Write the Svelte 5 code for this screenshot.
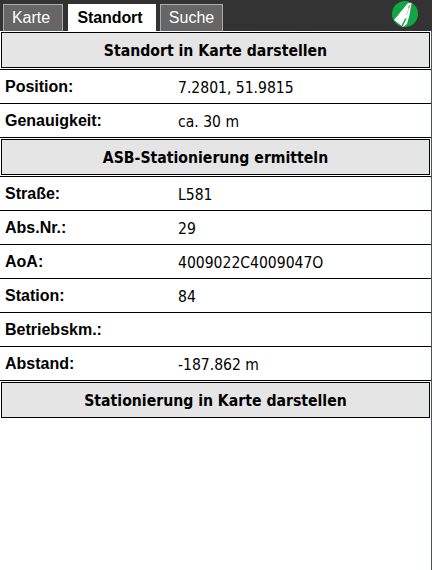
<script>
  const top = [["Position:", "7.2801, 51.9815"], ["Genauigkeit:", "ca. 30 m"]];
  const asb = [["Straße:", "L581"], ["Abs.Nr.:", "29"], ["AoA:", "4009022C4009047O"], ["Station:", "84"], ["Betriebskm.:", ""], ["Abstand:", "-187.862 m"]];
</script>

<div class="page">
  <header class="tabbar">
    <span class="tab karte">Karte</span>
    <span class="tab active">Standort</span>
    <span class="tab suche">Suche</span>
    <svg class="logo" width="28" height="28" viewBox="0 0 28 28" aria-hidden="true">
      <circle cx="14" cy="14" r="13" fill="#12a544" />
      <path d="M17 3 L20.5 3 L18.5 15 L16 24 L12 27 L3 20 Z" fill="#fff" />
      <path d="M11 26 L15 18.5" stroke="#12a544" stroke-width="1.5" />
      <path d="M18.4 5 L17.8 8.5" stroke="#e55" stroke-width="1.1" />
      <path d="M17.5 9.5 L15.5 15" stroke="#ccc" stroke-width="1" />
    </svg>
  </header>
  <main class="content">
    <div class="action-wrap"><button class="action">Standort in Karte darstellen</button></div>
    {#each top as [label, value]}
      <div class="row"><span class="label">{label}</span><span class="value">{value}</span></div>
    {/each}
    <div class="action-wrap"><button class="action">ASB-Stationierung ermitteln</button></div>
    {#each asb as [label, value]}
      <div class="row"><span class="label">{label}</span><span class="value">{value}</span></div>
    {/each}
    <div class="action-wrap last"><button class="action">Stationierung in Karte darstellen</button></div>
  </main>
</div>

<style>
  :global(body) { margin: 0; background: #fff; }
  .page { width: 432px; height: 570px; overflow: hidden; color: #000; position: relative; }
  .tabbar { display: flex; align-items: flex-end; height: 31px; background: #333; padding-left: 3px; position: relative; }
  .tab { box-sizing: border-box; height: 27px; border: 1px solid #aaa; border-bottom: 0; background: #666; color: #fff; font: 16px/26px "Liberation Sans", sans-serif; text-align: center; }
  .karte { width: 60px; margin-right: 5px; padding-right: 4px; }
  .tab.active { width: 88px; margin-right: 4px; padding-right: 4px; background: #fff; border-color: #fff; color: #000; font-weight: bold; letter-spacing: -0.1px; }
  .suche { width: 63px; }
  .logo { position: absolute; left: 391px; top: 0; }
  .content { display: flex; flex-direction: column; width: 431px; height: 539px; border-right: 1px solid #4a5560; }
  .action-wrap { box-sizing: border-box; height: 39px; padding: 1px; border-bottom: 1px solid #000; flex: none; }
  .action-wrap.last { border-bottom: 0; height: 38px; }
  .action { display: block; box-sizing: border-box; width: 429px; height: 36px; margin: 0; border: 1px solid #000; background: #e5e5e5; font: bold 15.65px "DejaVu Sans Condensed", "DejaVu Sans", sans-serif; color: #000; padding: 0; }
  .row { box-sizing: border-box; height: 34px; display: flex; align-items: center; border-bottom: 1px solid #000; flex: none; }
  .label { width: 178px; padding-left: 5px; box-sizing: border-box; font: bold 16px "Liberation Sans", sans-serif; }
  .value { padding-top: 2px; font: 15.55px "DejaVu Sans Condensed", "DejaVu Sans", sans-serif; }
</style>
